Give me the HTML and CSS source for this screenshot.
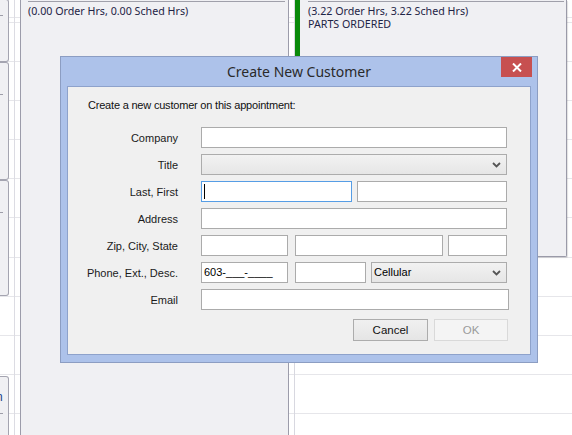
FILE: index.html
```html
<!DOCTYPE html>
<html lang="en">
<head>
    <meta charset="UTF-8">
    <title>Create New Customer</title>
    <link rel="stylesheet" href="styles.css">
</head>
<body>
    <div class="schedule">
        <div class="lane lane-narrow">
            <div class="appt appt-small first"><span class="tick tick-15"></span></div>
            <div class="appt appt-small second"><span class="tick tick-32"></span></div>
            <div class="appt appt-small third"><span class="tick tick-32"></span></div>
            <div class="appt appt-small fourth"><span class="cut-text">n</span><span class="tick tick-44"></span></div>
        </div>
        <div class="lane lane-mid">
            <div class="appt appt-tall">
                <div class="appt-line"></div>
                <div class="appt-text">(0.00 Order Hrs, 0.00 Sched Hrs)</div>
            </div>
        </div>
        <div class="lane lane-right">
            <div class="appt appt-green">
                <div class="appt-bar"></div>
                <div class="appt-body">
                    <div class="appt-line"></div>
                    <div class="appt-text">(3.22 Order Hrs, 3.22 Sched Hrs)</div>
                    <div class="appt-text">PARTS ORDERED</div>
                </div>
            </div>
        </div>
    </div>

    <div class="dialog">
        <div class="dialog-title">
            <span>Create New Customer</span>
            <div class="close-btn">
                <svg width="10" height="9" viewBox="0 0 10 9"><path d="M1 0.5 L9 8.5 M9 0.5 L1 8.5" stroke="#fff" stroke-width="2"/></svg>
            </div>
        </div>
        <div class="dialog-client">
            <div class="intro">Create a new customer on this appointment:</div>
            <div class="form">
                <div class="form-row">
                    <label>Company</label>
                    <div class="fields"><div class="field w-full"></div></div>
                </div>
                <div class="form-row">
                    <label>Title</label>
                    <div class="fields"><div class="combo w-full"><span></span><svg class="chev" width="9" height="6" viewBox="0 0 9 6"><path d="M1 1 L4.5 4.5 L8 1" stroke="#555" stroke-width="1.8" fill="none"/></svg></div></div>
                </div>
                <div class="form-row">
                    <label>Last, First</label>
                    <div class="fields">
                        <div class="field focus w-last"><span class="caret"></span></div>
                        <div class="field w-first"></div>
                    </div>
                </div>
                <div class="form-row">
                    <label>Address</label>
                    <div class="fields"><div class="field w-full"></div></div>
                </div>
                <div class="form-row">
                    <label>Zip, City, State</label>
                    <div class="fields">
                        <div class="field w-zip"></div>
                        <div class="field w-city gap-wide"></div>
                        <div class="field w-state"></div>
                    </div>
                </div>
                <div class="form-row">
                    <label>Phone, Ext., Desc.</label>
                    <div class="fields">
                        <div class="field w-zip">603-___-____</div>
                        <div class="field w-ext gap-wide"></div>
                        <div class="combo w-desc"><span>Cellular</span><svg class="chev" width="9" height="6" viewBox="0 0 9 6"><path d="M1 1 L4.5 4.5 L8 1" stroke="#555" stroke-width="1.8" fill="none"/></svg></div>
                    </div>
                </div>
                <div class="form-row">
                    <label>Email</label>
                    <div class="fields"><div class="field w-email"></div></div>
                </div>
            </div>
            <div class="buttons">
                <div class="btn">Cancel</div>
                <div class="btn disabled">OK</div>
            </div>
        </div>
    </div>
</body>
</html>
```

FILE: styles.css
```css
body {
    margin: 0;
    width: 572px;
    height: 435px;
    overflow: hidden;
    position: relative;
    background: #fff;
    font-family: 'Liberation Sans', Arial, sans-serif;
}
.schedule {
    display: flex;
    height: 435px;
    background-image: repeating-linear-gradient(to bottom, #e6e6ea 0 1px, transparent 1px 39.1px);
    background-position: 0 22px;
}
.lane {
    height: 100%;
    box-sizing: border-box;
}
.lane-narrow {
    width: 15px;
    border-right: 1px solid #dcdce3;
    display: flex;
    flex-direction: column;
}
.lane-mid {
    width: 269px;
    margin-left: 5px;
}
.lane-right {
    width: 278px;
    margin-left: 5px;
    border-left: 1px solid #d8d8e0;
}
.appt {
    background: #f0f0f3;
    box-sizing: border-box;
    position: relative;
}
.appt-small {
    width: 9px;
    flex-shrink: 0;
    border: 1px solid #a4a4b0;
    border-left: none;
    border-radius: 0 3px 3px 0;
}
.appt-small.first { height: 63px; margin-top: -1px; }
.appt-small.second { height: 118px; }
.appt-small.third { height: 116px; }
.appt-small.fourth { height: 80px; margin-top: 80px; overflow: hidden; }
.tick {
    display: block;
    width: 3px;
    height: 1px;
    background: #9d9da8;
}
.tick-15 { margin-top: 15px; }
.tick-32 { margin-top: 31px; }
.tick-44 { margin-top: 9px; }
.cut-text {
    display: block;
    margin-top: 13px;
    margin-left: -4px;
    font-size: 12px;
    line-height: 14px;
    color: #1b3f8a;
}
.appt-tall {
    height: 100%;
    border-left: 1px solid #9c9caa;
    border-right: 1px solid #9c9caa;
    padding: 1px 3px 0 7px;
}
.appt-line {
    height: 1px;
    background: #a0a0aa;
    margin-bottom: 3px;
}
.appt-text {
    font-family: 'Noto Sans', sans-serif;
    font-size: 10.7px;
    line-height: 13px;
    color: #1e2446;
    white-space: nowrap;
}
.appt-green {
    display: flex;
    width: 272px;
    height: 257px;
    border-right: 1px solid #9a9aa8;
    border-bottom: 1px solid #9a9aa8;
    border-radius: 0 0 2px 0;
    box-shadow: 1px 1px 1px rgba(0,0,0,0.12);
}
.appt-bar {
    width: 5px;
    background: #0a8a0a;
}
.appt-body {
    flex: 1;
    padding: 1px 2px 0 8px;
}

/* dialog */
.dialog {
    position: absolute;
    left: 60px;
    top: 56px;
    width: 478px;
    height: 307px;
    box-sizing: border-box;
    background: #adc2ea;
    border: 1px solid #8c9dc2;
    display: flex;
    flex-direction: column;
    padding: 0 6px 7px 6px;
}
.dialog-title {
    height: 29px;
    display: flex;
    align-items: center;
    justify-content: center;
    position: relative;
    font-family: 'Noto Sans', sans-serif;
    font-size: 14px;
    color: #2a2a2a;
}
.dialog-title span {
    margin-top: -1px;
}
.close-btn {
    position: absolute;
    right: -1px;
    top: 0;
    width: 31px;
    height: 20px;
    background: #c75050;
    display: flex;
    align-items: center;
    justify-content: center;
}
.dialog-client {
    flex: 1;
    background: #f0f0f0;
    border: 1px solid #8ea2cb;
    padding: 12px 0 0 0;
    font-size: 11px;
    color: #111;
}
.intro {
    line-height: 13px;
    padding-left: 20px;
    letter-spacing: -0.2px;
}
.form {
    margin-top: 15px;
    display: flex;
    flex-direction: column;
    gap: 6px;
}
.form-row {
    display: flex;
    align-items: center;
    height: 21px;
}
.form-row label {
    width: 110px;
    text-align: right;
    margin-right: 23px;
    color: #1a1a1a;
}
.fields {
    display: flex;
    gap: 5px;
}
.field, .combo {
    height: 21px;
    box-sizing: border-box;
    border: 1px solid #ababab;
    background: #fff;
    padding-left: 2px;
    line-height: 19px;
    color: #000;
    position: relative;
}
.field.focus {
    border-color: #569de5;
}
.caret {
    position: absolute;
    left: 2px;
    top: 2px;
    width: 1px;
    height: 15px;
    background: #000;
}
.combo {
    background: linear-gradient(#f2f2f2, #e6e6e6);
    border-color: #acacac;
    display: flex;
    justify-content: space-between;
    align-items: center;
    padding-right: 5px;
}
.combo span {
    line-height: 19px;
}
.chev {
    margin-top: 1px;
}
.gap-wide { margin-left: 2px; }
.w-full { width: 306px; }
.w-last { width: 151px; }
.w-first { width: 150px; }
.w-zip { width: 87px; }
.w-city { width: 148px; }
.w-state { width: 59px; }
.w-ext { width: 71px; }
.w-desc { width: 136px; }
.w-email { width: 308px; }
.buttons {
    display: flex;
    justify-content: flex-end;
    gap: 6px;
    margin-top: 9px;
    padding-right: 22px;
}
.btn {
    width: 75px;
    height: 22px;
    box-sizing: border-box;
    border: 1px solid #acacac;
    background: linear-gradient(#f0f0f0, #e5e5e5);
    text-align: center;
    line-height: 20px;
    font-size: 11.5px;
    color: #111;
}
.btn.disabled {
    width: 74px;
    background: #f4f4f4;
    border-color: #d9d9d9;
    color: #9a9a9a;
}
```
